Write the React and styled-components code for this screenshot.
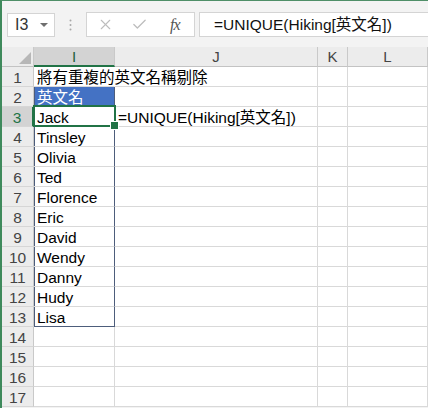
import React from 'react';
import styled, { createGlobalStyle } from 'styled-components';
import { X, Check } from 'lucide-react';

const GlobalStyle = createGlobalStyle`
  body { margin: 0; background: #fff; }
  * { box-sizing: border-box; }
`;

const Window = styled.div`
  width: 428px;
  height: 408px;
  overflow: hidden;
  background: #f3f3f3;
  border-top: 1px solid #4f8f68;
  border-left: 2px solid #3f8a5c;
  font-family: "Liberation Sans", "Noto Sans CJK TC", sans-serif;
`;

const Toolbar = styled.div`
  display: flex;
  align-items: center;
  height: 46px;
  padding: 11px 0 10px 5px;
`;

const NameBox = styled.div`
  display: flex;
  align-items: center;
  justify-content: space-between;
  width: 48px;
  height: 24px;
  padding: 0 6px 0 7px;
  background: #fff;
  border: 1px solid #d4d4d4;
  color: #333;
  font-size: 16px;
`;

const Caret = styled.span`
  width: 0;
  height: 0;
  border-left: 4px solid transparent;
  border-right: 4px solid transparent;
  border-top: 4px solid #6f6f6f;
`;

const Grip = styled.svg`
  margin: 0 14px;
  flex: none;
`;

const FormulaButtons = styled.div`
  display: flex;
  align-items: center;
  width: 109px;
  height: 25px;
  padding-left: 10px;
  background: #fff;
  border: 1px solid #d4d4d4;
  color: #bdbdbd;
`;

const Fx = styled.span`
  margin-left: 22px;
  font-family: "Liberation Serif", serif;
  font-style: italic;
  font-size: 16px;
  color: #555;
  letter-spacing: -1px;
`;

const FormulaBar = styled.div`
  flex: 1;
  height: 25px;
  margin-left: 4px;
  padding-left: 14px;
  background: #fff;
  border: 1px solid #d4d4d4;
  border-right: none;
  font-size: 15.5px;
  line-height: 23px;
  color: #111;
  white-space: nowrap;
`;

const Sheet = styled.div`
  display: grid;
  grid-template-columns: 32px 81px 203px 30px 80px;
  grid-auto-rows: 20px;
  background: #fff;
`;

const Corner = styled.div`
  position: relative;
  background: #ececec;
  border-right: 1px solid #c9c9c9;
  border-bottom: 1px solid #c3c3c3;

  &::after {
    content: '';
    position: absolute;
    right: 2px;
    bottom: 2px;
    border-left: 12px solid transparent;
    border-bottom: 12px solid #b7b7b7;
  }
`;

const ColHead = styled.div`
  background: ${p => (p.$active ? '#d3d3d3' : '#ececec')};
  border-right: 1px solid #c9c9c9;
  border-bottom: ${p => (p.$active ? '2px solid #217346' : '1px solid #c3c3c3')};
  color: ${p => (p.$active ? '#1f5e3b' : '#444')};
  font-size: 15px;
  line-height: 19px;
  text-align: center;
`;

const RowHead = styled.div`
  padding-top: 1px;
  background: ${p => (p.$active ? '#d3d3d3' : '#ececec')};
  border-right: ${p => (p.$active ? '2px solid #217346' : '1px solid #c9c9c9')};
  border-bottom: 1px solid #d6d6d6;
  color: ${p => (p.$active ? '#217346' : '#444')};
  font-size: 15.5px;
  line-height: 19px;
  text-align: center;
`;

const tableEdge = '#4d5d7b';

const Cell = styled.div`
  position: ${p => (p.$selected ? 'relative' : 'static')};
  padding: 1px 0 0 3px;
  background: ${p => (p.$heading ? '#4472c4' : 'transparent')};
  color: ${p => (p.$heading ? '#fff' : '#000')};
  border-right: 1px solid ${p => (p.$table ? tableEdge : p.$spill ? 'transparent' : '#d9d9d9')};
  border-bottom: 1px solid ${p => (p.$tableEnd ? tableEdge : '#d9d9d9')};
  box-shadow: ${p => (p.$table ? `inset 1px 0 0 ${tableEdge}` : 'none')};
  font-size: 15.5px;
  line-height: 19px;
  white-space: nowrap;
  overflow: visible;

  ${p => p.$selected && `
    &::after {
      content: '';
      position: absolute;
      inset: -2px -2px -1px -1px;
      border: 2px solid #217346;
    }
    &::before {
      content: '';
      position: absolute;
      right: -5px;
      bottom: -4px;
      width: 7px;
      height: 7px;
      background: #217346;
      border: 1px solid #fff;
      z-index: 2;
    }
  `}
`;

const columns = [
  { key: 'I', active: true },
  { key: 'J' },
  { key: 'K' },
  { key: 'L' },
];

const names = ['Jack', 'Tinsley', 'Olivia', 'Ted', 'Florence', 'Eric', 'David', 'Wendy', 'Danny', 'Hudy', 'Lisa'];

const rows = [
  { I: '將有重複的英文名稱剔除', spill: true },
  { I: '英文名', heading: true },
  ...names.map((n, i) => (i === 0 ? { I: n, J: '=UNIQUE(Hiking[英文名])' } : { I: n })),
  {}, {}, {}, {},
];

export default function App() {
  return (
    <>
      <GlobalStyle />
      <Window>
        <Toolbar>
          <NameBox>
            I3
            <Caret />
          </NameBox>
          <Grip width="3" height="12" viewBox="0 0 3 12">
            <circle cx="1.5" cy="1.5" r="1" fill="#a8a8a8" />
            <circle cx="1.5" cy="6" r="1" fill="#a8a8a8" />
            <circle cx="1.5" cy="10.5" r="1" fill="#a8a8a8" />
          </Grip>
          <FormulaButtons>
            <X size={17} strokeWidth={1.6} />
            <Check size={17} strokeWidth={1.8} style={{ marginLeft: 17 }} />
            <Fx>fx</Fx>
          </FormulaButtons>
          <FormulaBar>=UNIQUE(Hiking[英文名])</FormulaBar>
        </Toolbar>
        <Sheet>
          <Corner />
          {columns.map(c => (
            <ColHead key={c.key} $active={c.active}>{c.key}</ColHead>
          ))}
          {rows.map((r, i) => {
            const n = i + 1;
            const inTable = n >= 2 && n <= 13;
            return (
              <React.Fragment key={n}>
                <RowHead $active={n === 3}>{n}</RowHead>
                <Cell
                  $spill={r.spill}
                  $heading={r.heading}
                  $table={inTable}
                  $tableEnd={n === 13}
                  $selected={n === 3}
                >
                  {r.I}
                </Cell>
                <Cell>{r.J}</Cell>
                <Cell />
                <Cell />
              </React.Fragment>
            );
          })}
        </Sheet>
      </Window>
    </>
  );
}
